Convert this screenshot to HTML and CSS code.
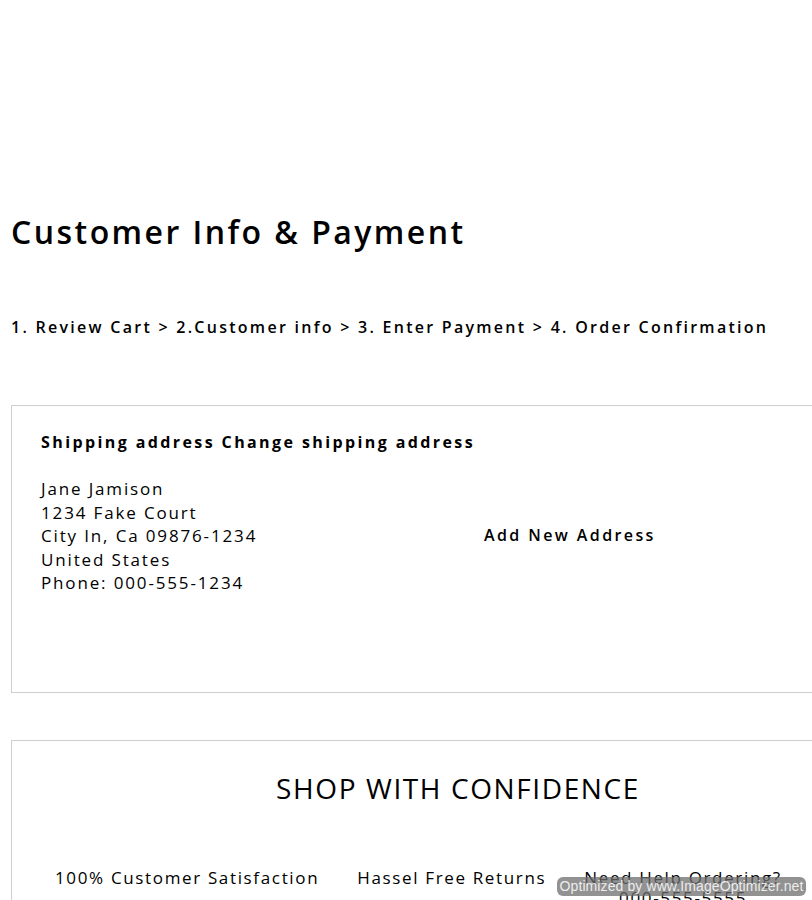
FILE: index.html
```html
<!DOCTYPE html>
<html lang="en">
<head>
<meta charset="utf-8">
<title>Customer Info &amp; Payment</title>
<link rel="stylesheet" href="styles.css">
</head>
<body>
<main class="page">
  <h1 class="title">Customer Info &amp; Payment</h1>
  <p class="steps">1. Review Cart &gt; 2.Customer info &gt; 3. Enter Payment &gt; 4. Order Confirmation</p>

  <section class="card shipping">
    <h2 class="card-heading">Shipping address Change shipping address</h2>
    <div class="ship-row">
      <address class="address">
        Jane Jamison<br>
        1234 Fake Court<br>
        City In, Ca 09876-1234<br>
        United States<br>
        Phone: 000-555-1234
      </address>
      <a class="add-link">Add New Address</a>
    </div>
  </section>

  <section class="card confidence">
    <h2 class="conf-heading">SHOP WITH CONFIDENCE</h2>
    <div class="conf-row">
      <div class="conf-item">100% Customer Satisfaction</div>
      <div class="conf-item">Hassel Free Returns</div>
      <div class="conf-item">Need Help Ordering?<br>000-555-5555</div>
    </div>
  </section>
</main>
<div class="watermark">Optimized by www.ImageOptimizer.net</div>
</body>
</html>
```

FILE: styles.css
```css
html, body {
  margin: 0;
  padding: 0;
  background: #fff;
  overflow: hidden;
}
body {
  font-family: "Open Sans", "Noto Sans", sans-serif;
  color: #000;
  height: 900px;
  position: relative;
}
.page {
  padding: 0 0 0 11px;
  width: 1000px;
}
.title {
  margin: 0;
  padding-top: 210px;
  font-size: 32px;
  line-height: 44px;
  font-weight: 600;
  letter-spacing: 2.45px;
}
.steps {
  margin: 0;
  padding-top: 62px;
  font-size: 16px;
  line-height: 22px;
  font-weight: 600;
  letter-spacing: 2.27px;
}
.card {
  border: 1px solid #cfcfcf;
  width: 894px;
  box-sizing: border-box;
}
.shipping {
  margin-top: 67px;
  height: 288px;
  padding: 24px 29px 0;
}
.card-heading {
  margin: 0;
  font-size: 16px;
  line-height: 24px;
  font-weight: 700;
  letter-spacing: 2.4px;
}
.ship-row {
  display: flex;
  align-items: center;
  margin-top: 23px;
}
.address {
  font-style: normal;
  width: 443px;
  font-size: 17px;
  line-height: 23.5px;
  font-weight: 400;
  letter-spacing: 1.85px;
}
.add-link {
  font-size: 16px;
  font-weight: 600;
  letter-spacing: 2.4px;
  line-height: 23px;
}
.confidence {
  margin-top: 47px;
  height: 300px;
  padding-top: 29px;
}
.conf-heading {
  margin: 0;
  text-align: center;
  font-size: 28px;
  line-height: 36px;
  font-weight: 500;
  letter-spacing: 1.6px;
}
.conf-row {
  display: flex;
  gap: 38px;
  padding-left: 43px;
  margin-top: 62px;
}
.conf-item {
  text-align: center;
  font-size: 17px;
  line-height: 20px;
  font-weight: 500;
  letter-spacing: 1.65px;
}
.watermark {
  position: absolute;
  left: 557px;
  top: 877px;
  width: 249px;
  height: 19px;
  border-radius: 6px;
  background: rgba(110, 110, 110, 0.75);
  color: rgba(255, 255, 255, 0.85);
  font-family: "Liberation Sans", sans-serif;
  font-size: 14px;
  line-height: 19px;
  text-align: center;
  letter-spacing: 0.1px;
  white-space: nowrap;
}
```
